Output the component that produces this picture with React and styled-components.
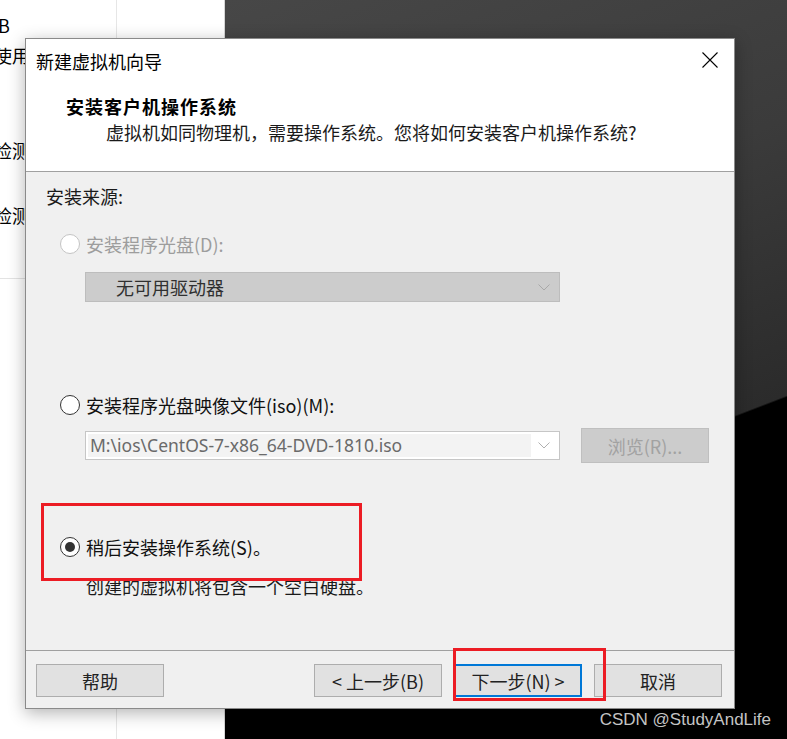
import React from 'react'
import styled, { createGlobalStyle } from 'styled-components'

const GlobalStyle = createGlobalStyle`
    html, body {
        margin: 0;
        padding: 0;
        overflow: hidden;
    }
    body {
        font-family: "Noto Sans CJK SC", "Noto Sans", sans-serif;
        color: #000;
    }
`;

function Radio({ checked, disabled }) {
    return <RadioMark $checked={checked} $disabled={disabled} />
}

function Chevron({ color }) {
    return (
        <svg width="12" height="7" viewBox="0 0 12 7">
            <path d="M0.5 0.5 L6 6 L11.5 0.5" fill="none" stroke={color} strokeWidth="1" />
        </svg>
    )
}

function App() {
    return (
        <Desktop>
            <GlobalStyle />
            <LeftPane>
                <ListColumn>
                    <ListItem $top={13} $shift={-2}>B</ListItem>
                    <ListItem $top={6} $shift={-6}>使用</ListItem>
                    <ListItem $top={71} $shift={-6}>检测</ListItem>
                    <ListItem $top={41} $shift={-6}>检测</ListItem>
                    <ListDivider />
                </ListColumn>
            </LeftPane>
            <Canvas />

            <Dialog>
                <TitleBar>
                    <span>新建虚拟机向导</span>
                    <CloseButton>
                        <svg width="16" height="16" viewBox="0 0 16 16">
                            <path d="M0.5 0.5 L15.5 15.5 M15.5 0.5 L0.5 15.5" stroke="#000" strokeWidth="1.1" />
                        </svg>
                    </CloseButton>
                </TitleBar>
                <Header>
                    <HeaderTitle>安装客户机操作系统</HeaderTitle>
                    <HeaderSub>虚拟机如同物理机，需要操作系统。您将如何安装客户机操作系统?</HeaderSub>
                </Header>
                <Body>
                    <SectionLabel>安装来源:</SectionLabel>

                    <OptionRow $top={24} $disabled>
                        <Radio disabled />
                        <span>安装程序光盘(D):</span>
                    </OptionRow>
                    <Select $disabled>
                        <span>无可用驱动器</span>
                        <Chevron color="#a8a8a8" />
                    </Select>

                    <OptionRow $top={91}>
                        <Radio />
                        <span>安装程序光盘映像文件(iso)(M):</span>
                    </OptionRow>
                    <ComboRow>
                        <Combo>
                            <ComboText>M:\ios\CentOS-7-x86_64-DVD-1810.iso</ComboText>
                            <ComboArrow>
                                <Chevron color="#b0b0b0" />
                            </ComboArrow>
                        </Combo>
                        <BrowseButton>浏览(R)...</BrowseButton>
                    </ComboRow>

                    <OptionRow $top={72}>
                        <Radio checked />
                        <span>稍后安装操作系统(S)。</span>
                    </OptionRow>
                    <Description>创建的虚拟机将包含一个空白硬盘。</Description>

                    <Annotation $left={15} $top={331} $width={321} $height={78} />
                </Body>
                <Footer>
                    <Button>帮助</Button>
                    <ButtonGroup>
                        <Button>&lt; 上一步(B)</Button>
                        <Button $primary>下一步(N) &gt;</Button>
                        <Button>取消</Button>
                    </ButtonGroup>
                    <Annotation $left={427} $top={-3} $width={153} $height={53} />
                </Footer>
            </Dialog>

            <Watermark>CSDN @StudyAndLife</Watermark>
        </Desktop>
    )
}

const Desktop = styled.div`
    position: relative;
    display: flex;
    width: 787px;
    height: 739px;
    overflow: hidden;
`;

const LeftPane = styled.div`
    width: 224px;
    flex-shrink: 0;
    background: #fff;
    border-right: 1px solid #d6d6d6;
`;

const ListColumn = styled.div`
    width: 116px;
    height: 100%;
    border-right: 1px solid #e6e6e6;
    display: flex;
    flex-direction: column;
    overflow: hidden;
`;

const ListItem = styled.div`
    margin-top: ${p => p.$top}px;
    margin-left: ${p => p.$shift}px;
    height: 24px;
    line-height: 24px;
    font-size: 18px;
    white-space: nowrap;
`;

const ListDivider = styled.div`
    margin-top: 51px;
    width: 224px;
    border-top: 1px solid #e3e3e3;
`;

const Canvas = styled.div`
    flex: 1;
    background: linear-gradient(159deg, #474747 0%, #3b3b3b 35%, #2b2b2b 64%, #000 64.2%);
`;

const Dialog = styled.div`
    position: absolute;
    left: 25px;
    top: 38px;
    width: 710px;
    height: 671px;
    box-sizing: border-box;
    border: 1px solid #8a8a8a;
    background: #f0f0f0;
    box-shadow: 0 4px 16px rgba(0, 0, 0, 0.3);
    display: flex;
    flex-direction: column;
`;

const TitleBar = styled.div`
    height: 44px;
    background: #fff;
    display: flex;
    align-items: center;
    justify-content: space-between;
    padding: 0 16px 0 10px;
    font-size: 18px;
    flex-shrink: 0;
`;

const CloseButton = styled.div`
    display: flex;
    align-items: center;
    margin-top: -2px;
`;

const Header = styled.div`
    height: 88px;
    background: #fff;
    border-bottom: 1px solid #a0a0a0;
    padding-left: 40px;
    flex-shrink: 0;
`;

const HeaderTitle = styled.div`
    margin-top: 10px;
    height: 26px;
    line-height: 26px;
    font-size: 18px;
    font-weight: 700;
    letter-spacing: 1px;
`;

const HeaderSub = styled.div`
    padding-left: 40px;
    height: 26px;
    line-height: 26px;
    font-size: 18px;
    color: #1a1a1a;
`;

const Body = styled.div`
    position: relative;
    flex: 1;
    display: flex;
    flex-direction: column;
    padding-left: 20px;
    padding-top: 12px;
`;

const SectionLabel = styled.div`
    height: 24px;
    line-height: 24px;
    font-size: 18px;
    color: #1a1a1a;
`;

const OptionRow = styled.div`
    margin-top: ${p => p.$top}px;
    margin-left: 14px;
    height: 24px;
    display: flex;
    align-items: center;
    gap: 6px;
    font-size: 18px;
    line-height: 24px;
    color: ${p => (p.$disabled ? '#9d9d9d' : '#111')};
`;

const RadioMark = styled.span`
    position: relative;
    width: 20px;
    height: 20px;
    box-sizing: border-box;
    border-radius: 50%;
    border: 1px solid ${p => (p.$disabled ? '#c4c4c4' : '#333')};
    background: #fff;
    flex-shrink: 0;
    &::after {
        content: '';
        display: ${p => (p.$checked ? 'block' : 'none')};
        position: absolute;
        left: 4px;
        top: 4px;
        width: 10px;
        height: 10px;
        border-radius: 50%;
        background: #333;
    }
`;

const Select = styled.div`
    margin-top: 16px;
    margin-left: 39px;
    width: 475px;
    height: 30px;
    box-sizing: border-box;
    border: 1px solid #bdbdbd;
    background: #cccccc;
    display: flex;
    align-items: center;
    justify-content: space-between;
    padding: 0 9px 0 30px;
    font-size: 18px;
    color: #303030;
`;

const ComboRow = styled.div`
    margin-top: 11px;
    margin-left: 39px;
    display: flex;
    align-items: center;
    gap: 21px;
`;

const Combo = styled.div`
    width: 475px;
    height: 29px;
    box-sizing: border-box;
    border: 1px solid #c6c6c6;
    background: #fff;
    display: flex;
    align-items: stretch;
    padding: 2px;
`;

const ComboText = styled.div`
    flex: 1;
    background: #f3f3f3;
    font-family: "Noto Sans", "Open Sans", sans-serif;
    font-size: 17.5px;
    line-height: 23px;
    color: #6a6a6a;
    padding-left: 2px;
    white-space: nowrap;
    overflow: hidden;
`;

const ComboArrow = styled.div`
    width: 26px;
    display: flex;
    align-items: center;
    justify-content: center;
`;

const BrowseButton = styled.div`
    width: 128px;
    height: 35px;
    box-sizing: border-box;
    border: 1px solid #bfbfbf;
    background: #cccccc;
    display: flex;
    align-items: center;
    justify-content: center;
    font-size: 18px;
    color: #a2a2a2;
`;

const Description = styled.div`
    margin-top: 15px;
    margin-left: 40px;
    height: 24px;
    line-height: 24px;
    font-size: 18px;
    color: #1a1a1a;
`;

const Footer = styled.div`
    position: relative;
    height: 58px;
    box-sizing: border-box;
    border-top: 1px solid #a0a0a0;
    display: flex;
    align-items: flex-start;
    justify-content: space-between;
    padding: 13px 12px 0 10px;
    flex-shrink: 0;
`;

const ButtonGroup = styled.div`
    display: flex;
    gap: 12px;
`;

const Button = styled.div`
    width: 128px;
    height: 33px;
    box-sizing: border-box;
    border: ${p => (p.$primary ? '2px solid #0078d7' : '1px solid #adadad')};
    background: #e1e1e1;
    display: flex;
    align-items: center;
    justify-content: center;
    font-size: 18px;
    color: #222;
    white-space: nowrap;
`;

const Annotation = styled.div`
    position: absolute;
    left: ${p => p.$left}px;
    top: ${p => p.$top}px;
    width: ${p => p.$width}px;
    height: ${p => p.$height}px;
    box-sizing: border-box;
    border: 3px solid #ec1c24;
    pointer-events: none;
`;

const Watermark = styled.div`
    position: absolute;
    right: 16px;
    bottom: 9px;
    font-family: "Liberation Sans", Arial, sans-serif;
    font-size: 17px;
    color: #c4c4c4;
`;

export default App
